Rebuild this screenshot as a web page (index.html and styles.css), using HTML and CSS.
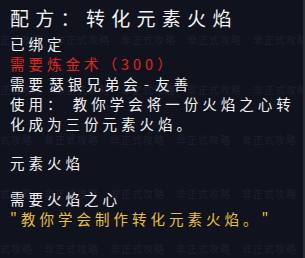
FILE: index.html
```html
<!DOCTYPE html>
<html lang="zh">
<head>
<meta charset="utf-8">
<link rel="stylesheet" href="styles.css">
</head>
<body>
<div class="tooltip">
  <div class="watermark" aria-hidden="true">
    <div class="wm-row r1">正式攻略　非正式攻略　非正式攻略　非正式攻略　非正式攻略　非正</div>
    <div class="wm-row r2">正式攻略　非正式攻略　非正式攻略　非正式攻略　非正式攻略　非正</div>
    <div class="wm-row r3">式攻略　非正式攻略　非正式攻略　非正式攻略　非正式攻略　非正</div>
    <div class="wm-row r4">式攻略　非正式攻略　非正式攻略　非正式攻略　非正式攻略　非正</div>
    <div class="wm-row r5">式攻略　非正式攻略　非正式攻略　非正式攻略　非正式攻略　非正</div>
  </div>
  <div class="title">配方：转化元素火焰</div>
  <div class="line">已绑定</div>
  <div class="line red">需要炼金术（300）</div>
  <div class="line tight">需要 瑟银兄弟会 - 友善</div>
  <div class="line">使用： 教你学会将一份火焰之心转化成为三份元素火焰。</div>
  <div class="line gap">元素火焰</div>
  <div class="line gap2">需要火焰之心</div>
  <div class="line gold">"教你学会制作转化元素火焰。"</div>
</div>
</body>
</html>
```
FILE: styles.css
```css
html, body {
  margin: 0;
  padding: 0;
  background: #10121e;
}
.tooltip {
  position: relative;
  width: 305px;
  height: 258px;
  box-sizing: border-box;
  padding: 6px 8px 0 10px;
  background: #10121e;
  border-right: 2px solid #2a2c36;
  overflow: hidden;
  font-family: "Noto Sans CJK SC", "Noto Sans", sans-serif;
  color: #f2f2f2;
}
.title {
  font-size: 19px;
  line-height: 24px;
  letter-spacing: 6.3px;
  margin-bottom: 4px;
  position: relative;
}
.line {
  font-size: 14.5px;
  line-height: 20px;
  letter-spacing: 4px;
  position: relative;
}
.tight { word-spacing: -5px; }
.red { color: #e0261c; }
.gold { color: #e8c13a; }
.gap { margin-top: 19px; }
.gap2 { margin-top: 16px; }
.watermark {
  position: absolute;
  left: 0;
  top: 0;
  right: 0;
  bottom: 0;
  pointer-events: none;
}
.wm-row {
  position: absolute;
  left: 0;
  white-space: nowrap;
  font-size: 10px;
  letter-spacing: 1px;
  color: #1e2030;
}
.r1 { top: 32px; }
.r2 { top: 82px; }
.r3 { top: 132px; }
.r4 { top: 186px; }
.r5 { top: 241px; }
```
